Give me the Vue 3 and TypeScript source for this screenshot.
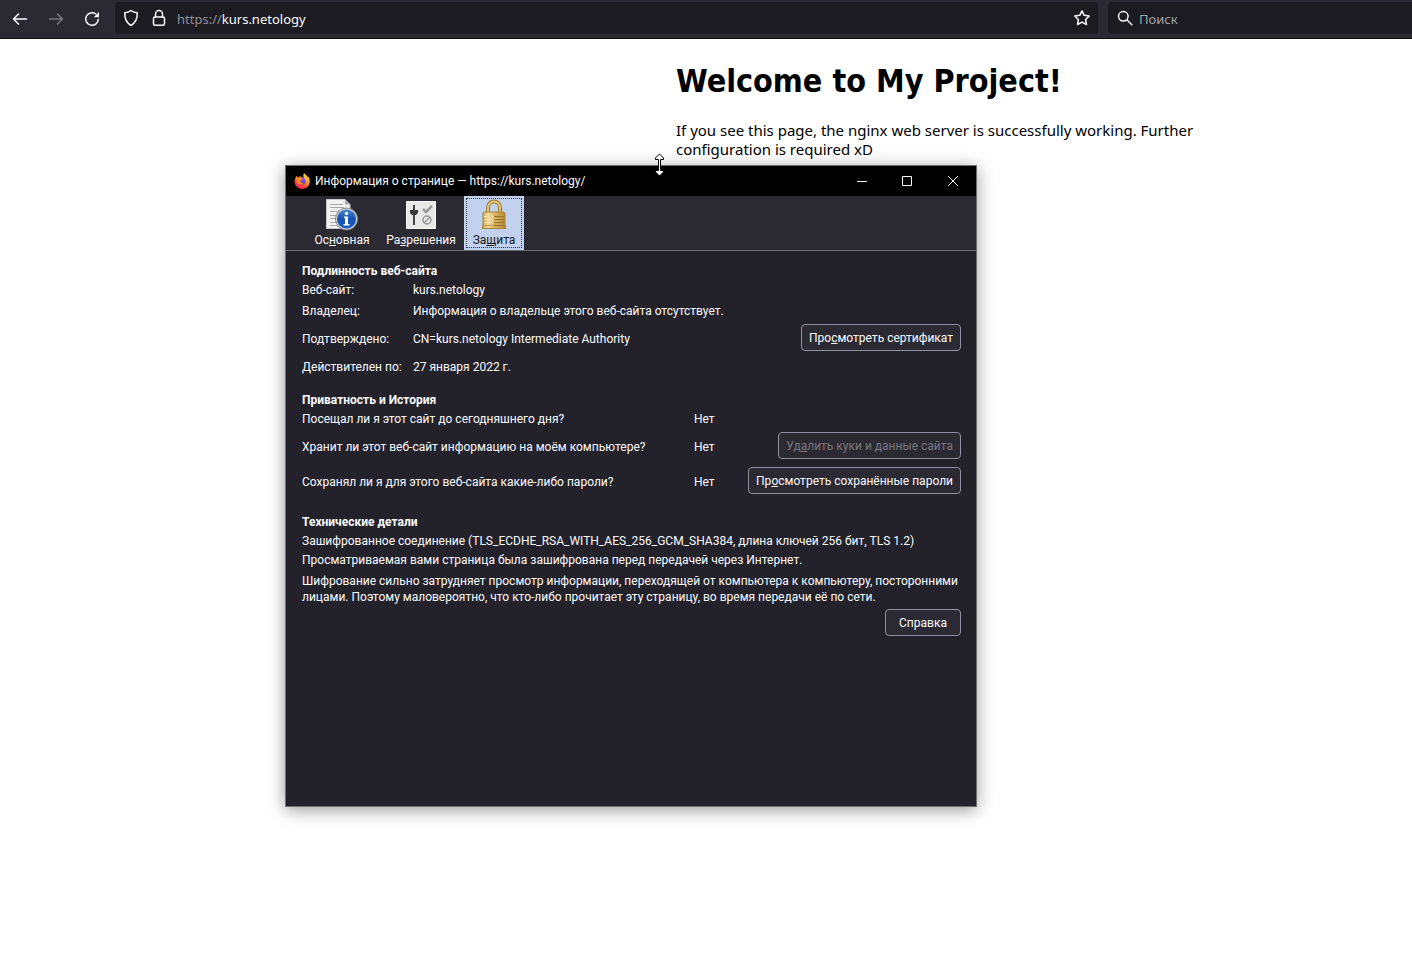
<script setup lang="ts">
import { ref } from 'vue'

interface Fact { label: string; value: string; kind: string }

const facts: Fact[] = [
  { label: 'Веб-сайт:', value: 'kurs.netology', kind: 'short' },
  { label: 'Владелец:', value: 'Информация о владельце этого веб-сайта отсутствует.', kind: 'short' },
  { label: 'Подтверждено:', value: 'CN=kurs.netology Intermediate Authority', kind: 'tall' },
  { label: 'Действителен по:', value: '27 января 2022 г.', kind: 'mid' },
]

const address = ref('kurs.netology')
const query = ref('')
</script>

<template>
  <div class="browser">
    <header class="navbar">
      <nav class="nav-buttons" aria-label="Навигация">
        <button type="button" aria-label="Назад">
          <svg width="16" height="16" viewBox="0 0 16 16"><path d="M14.5 8H1.500M6.500 3 1.500 8l5 5" /></svg>
        </button>
        <button type="button" aria-label="Вперёд" disabled>
          <svg width="16" height="16" viewBox="0 0 16 16"><path d="M1.500 8h13M9.500 3l5 5-5 5" /></svg>
        </button>
        <button type="button" aria-label="Обновить">
          <svg width="16" height="16" viewBox="0 0 16 16"><path d="M14.3 8.4A6.3 6.3 0 1 1 11.8 3" /><path class="solid" d="M15 1v5.2h-5.2z" /></svg>
        </button>
      </nav>

      <div class="field url-field">
        <svg width="16" height="18" viewBox="0 0 16 18"><path d="M8 1.5c2 1.5 4 2.1 6.2 2.3.3 5.2-1 9.5-6.2 12.7C2.8 13.3 1.5 9 1.8 3.8 4 3.6 6 3 8 1.5z" /></svg>
        <svg class="lock" width="14" height="18" viewBox="0 0 14 18"><rect x="1.5" y="8" width="11" height="8.3" rx="1.5" /><path d="M3.5 8V5a3.5 3.5 0 0 1 7 0v3" /></svg>
        <label class="url"><span class="scheme">https://</span><input v-model="address" type="text" aria-label="Адрес" /></label>
        <button type="button" aria-label="Добавить в закладки">
          <svg width="18" height="18" viewBox="0 0 18 18"><path d="m9 1.8 2.2 4.5 5 .7-3.6 3.5.9 5L9 13.1l-4.5 2.4.9-5L1.800 7l5-.7z" /></svg>
        </button>
      </div>

      <div class="field search-field">
        <svg width="16" height="16" viewBox="0 0 16 16"><circle cx="6.3" cy="6.3" r="4.8" /><path d="m9.8 9.8 5 5" /></svg>
        <input v-model="query" type="search" placeholder="Поиск" aria-label="Поиск" />
      </div>
    </header>

    <main class="page">
      <h1>Welcome to My Project!</h1>
      <p>If you see this page, the nginx web server is successfully working. Further configuration is required xD</p>
    </main>

    <section class="window" role="dialog" aria-labelledby="window-title">
      <div class="titlebar">
        <svg class="fox" width="16" height="16" viewBox="0 0 18 18">
          <defs>
            <linearGradient id="flame" x1="0.85" y1="0.05" x2="0.25" y2="1">
              <stop offset="0" stop-color="#ffe13a" /><stop offset="0.4" stop-color="#ff9a1f" /><stop offset="0.7" stop-color="#ff4a38" /><stop offset="1" stop-color="#ed1567" />
            </linearGradient>
            <linearGradient id="globe" x1="0" y1="0" x2="0" y2="1">
              <stop offset="0" stop-color="#9a5cff" /><stop offset="1" stop-color="#5a34b8" />
            </linearGradient>
          </defs>
          <path fill="url(#flame)" d="M11.5 0c1 2 3 2.500 4.300 5l.7-1c1.700 4 2 8-1 11.200C12.700 18.400 6.500 19 3 15.500.2 12.600.1 8.400 1.600 5.700L2.700 3l1.300 2c.7-.3 1.300-.3 2 0L8 3.200V5l3 .5C10 3.500 10.300 1.500 11.500 0z" />
          <circle cx="9" cy="9" r="4" fill="url(#globe)" />
          <path fill="#ff8a1f" d="M2.600 5.500 5.500 5l2.800.8 1.200 1.400c-1 .9-2.300.8-2.600 2.100.2 1.600 2 2.200 3.800 1.300-1.200 3.100-5.700 3.300-7.200.2z" />
        </svg>
        <h2 id="window-title">Информация о странице — https://kurs.netology/</h2>
        <div class="controls">
          <button type="button" aria-label="Свернуть"><svg width="10" height="10" viewBox="0 0 10 10"><path d="M0 5.5h10" /></svg></button>
          <button type="button" aria-label="Развернуть"><svg width="10" height="10" viewBox="0 0 10 10"><path d="M.5.5h9v9h-9z" /></svg></button>
          <button type="button" aria-label="Закрыть"><svg width="10" height="10" viewBox="0 0 10 10"><path d="m0 0 10 10M10 0 0 10" /></svg></button>
        </div>
      </div>

      <div class="tabs" role="tablist">
        <button type="button" role="tab" aria-selected="false">
          <svg width="34" height="32" viewBox="0 0 34 32">
            <defs>
              <linearGradient id="info" x1="0" y1="0" x2="0" y2="1"><stop offset="0" stop-color="#4a86d8" /><stop offset="0.5" stop-color="#1550b0" /><stop offset="1" stop-color="#1a60c8" /></linearGradient>
            </defs>
            <path fill="#f2f2f2" stroke="#c8c8c8" d="M1.5.5H20l5 5v24H1.500z" />
            <path fill="#aaa" d="M20 .5v5h5z" />
            <path stroke="#a8a8a8" d="M5 5.5h13M5 8.5h14M5 12.500h9M5 16.500h7M5 19.500h6M5 23.500h7M5 26.500h9" />
            <circle cx="21.500" cy="20" r="11" fill="#d4d4d4" stroke="#888" />
            <circle cx="21.500" cy="20" r="9.500" fill="url(#info)" />
            <circle cx="21.500" cy="14.500" r="1.700" fill="#fff" />
            <path fill="#fff" d="M19 17.500h4v7.500h1.500v1.500h-6V25H20v-6h-1z" />
          </svg>
          <span>Ос<u>н</u>овная</span>
        </button>
        <button type="button" role="tab" aria-selected="false">
          <svg width="34" height="32" viewBox="0 0 34 32">
            <path fill="#e8e8e8" stroke="#f8f8f8" d="M2.500 2.500h29v27h-29z" />
            <path stroke="#444" stroke-width="2" d="M10 6v20" />
            <path fill="#383838" d="M6 11h8v3l-2 2H8l-2-2z" />
            <path fill="none" stroke="#999" stroke-width="2.500" d="m19 10 3 3 6-6" />
            <circle cx="23" cy="21" r="4" fill="none" stroke="#999" stroke-width="1.500" />
            <path stroke="#999" stroke-width="1.500" d="m20 24 6-6" />
          </svg>
          <span>Ра<u>з</u>решения</span>
        </button>
        <button type="button" role="tab" aria-selected="true">
          <svg width="34" height="32" viewBox="0 0 34 32">
            <defs>
              <linearGradient id="brass" x1="0" y1="0" x2="1" y2="0"><stop offset="0" stop-color="#c39a42" /><stop offset="0.25" stop-color="#f4dda0" /><stop offset="0.55" stop-color="#d8b260" /><stop offset="1" stop-color="#b08630" /></linearGradient>
            </defs>
            <path fill="none" stroke="#9a772c" stroke-width="4" d="M11 14V8.500a6 6 0 0 1 12 0V14" />
            <path fill="none" stroke="#e4c67d" stroke-width="2" d="M11 14V8.500a6 6 0 0 1 12 0V14" />
            <path fill="url(#brass)" stroke="#a98436" d="M7.500 13h19q1.500 0 1.500 1.500V26l1 3.500H5L6 26V14.500Q6 13 7.500 13z" />
            <path stroke="#f0dba2" d="M7 17.500h10M7 20.500h10M7 23.500h10" />
            <path stroke="#9a7228" d="M17 17.500h10M17 20.500h10M17 23.500h10M17 26.500h11" />
            <path stroke="#c29a48" d="M6 26.500h11" />
          </svg>
          <span>За<u>щ</u>ита</span>
        </button>
      </div>

      <div class="panel">
        <h3>Подлинность веб-сайта</h3>
        <table class="identity">
          <tbody>
            <tr v-for="fact in facts" :key="fact.label" :class="fact.kind">
              <th scope="row">{{ fact.label }}</th>
              <td>{{ fact.value }}</td>
              <td class="action"><button v-if="fact.kind === 'tall'" class="push" type="button">Про<u>с</u>мотреть сертификат</button></td>
            </tr>
          </tbody>
        </table>

        <h3>Приватность и История</h3>
        <table class="privacy">
          <tbody>
            <tr class="short">
              <th scope="row">Посещал ли я этот сайт до сегодняшнего дня?</th>
              <td>Нет</td>
              <td class="action"></td>
            </tr>
            <tr class="tall">
              <th scope="row">Хранит ли этот веб-сайт информацию на моём компьютере?</th>
              <td>Нет</td>
              <td class="action"><button class="push" type="button" disabled>Уд<u>а</u>лить куки и данные сайта</button></td>
            </tr>
            <tr class="taller">
              <th scope="row">Сохранял ли я для этого веб-сайта какие-либо пароли?</th>
              <td>Нет</td>
              <td class="action"><button class="push" type="button">Пр<u>о</u>смотреть сохранённые пароли</button></td>
            </tr>
          </tbody>
        </table>

        <h3>Технические детали</h3>
        <p>Зашифрованное соединение (TLS_ECDHE_RSA_WITH_AES_256_GCM_SHA384, длина ключей 256 бит, TLS 1.2)</p>
        <p>Просматриваемая вами страница была зашифрована перед передачей через Интернет.</p>
        <p class="note">Шифрование сильно затрудняет просмотр информации, переходящей от компьютера к компьютеру, посторонними лицами. Поэтому маловероятно, что кто-либо прочитает эту страницу, во время передачи её по сети.</p>
        <div class="help"><button class="push" type="button">Справка</button></div>
      </div>
    </section>

    <svg class="pointer" width="11" height="24" viewBox="0 0 11 24" aria-hidden="true">
      <path d="M5.500 1 9.500 5v1.500h-3v11h3V19l-4 4-4-4v-1.500h3v-11h-3V5z" />
    </svg>
  </div>
</template>

<style>
body { margin: 0; background: #fff; }
</style>

<style scoped>
.browser { position: relative; min-height: 100vh; overflow: hidden; }
button { margin: 0; padding: 0; border: 0; background: none; color: inherit; font: inherit; }
svg { display: block; flex: none; }

.navbar {
  display: flex;
  height: 38px;
  border-bottom: 1px solid #0c0c0d;
  background: #2b2a33;
  color: #fbfbfe;
  font: 13px/18px "Noto Sans", sans-serif;
}
.navbar svg { fill: none; stroke: currentColor; stroke-width: 1.5; stroke-linecap: round; stroke-linejoin: round; }
.navbar .solid { fill: currentColor; stroke: none; }
.nav-buttons { display: flex; gap: 20px; padding: 0 15px 0 12px; }
.nav-buttons button:disabled { color: #77767e; }
.field {
  display: flex;
  align-items: center;
  box-sizing: border-box;
  height: 32px;
  margin-top: 2px;
  border-radius: 4px;
  background: #1c1b22;
}
.url-field { flex: 1; gap: 12px; padding: 0 7px 0 8px; }
.url { display: flex; flex: 1; padding-top: 2px; }
.lock { margin-right: -1px; margin-left: 1px; }
.scheme { color: #8f8f96; }
.field input { flex: 1; min-width: 0; padding: 0; border: 0; outline: 0; background: none; color: inherit; font: inherit; }
.search-field { width: 304px; margin-left: 10px; padding-left: 9px; gap: 6px; border-radius: 4px 0 0 4px; }
.search-field input { padding-top: 2px; }
.search-field input::placeholder { color: #a4a4aa; opacity: 1; }

.page { max-width: 560px; margin: 0 176px 0 auto; color: #000; font: 15px/19px "Noto Sans", sans-serif; }
.page h1 { margin: 0; padding-top: 23px; font: bold 32px/39px "DejaVu Sans Condensed", sans-serif; }
.page p { margin: 20px 0 0; }

.window {
  position: absolute;
  top: 165px;
  left: 285px;
  box-sizing: border-box;
  width: 692px;
  min-height: 642px;
  border: 1px solid #6f6f70;
  background: #23222b;
  color: #fbfbfe;
  font: 12px/16px Roboto, sans-serif;
  box-shadow: 0 3px 16px rgba(0, 0, 0, 0.4);
}
.titlebar { display: flex; align-items: center; height: 30px; padding-left: 8px; background: #000; }
.titlebar h2 { flex: 1; margin: 0 0 0 5px; font: inherit; }
.controls { display: flex; }
.controls button { display: grid; place-items: center; width: 45px; height: 28px; }
.controls button:last-child { width: 47px; }
.controls svg { fill: none; stroke: #fff; }

.tabs { display: flex; height: 54px; padding-left: 20px; border-bottom: 1px solid #6d6c72; background: #2b2a33; }
.tabs button { display: flex; flex-direction: column; align-items: center; gap: 1px; width: 72px; padding-top: 3px; }
.tabs button:nth-child(2) { width: 86px; }
.tabs button:nth-child(3) { width: 60px; }
.tabs button[aria-selected="true"] { background: #c2d2ee; color: #15141a; outline: 1px dotted #33333a; outline-offset: -3px; }

.panel { padding: 12px 15px 16px 16px; }
.panel h3 { margin: 0; font: bold 12px/16px Roboto, sans-serif; }
table { width: 100%; margin-bottom: 12px; border-spacing: 0; table-layout: fixed; }
th, td { padding: 0; font-weight: normal; text-align: left; white-space: nowrap; }
.identity th { width: 111px; }
.identity .action { width: 160px; }
.privacy { margin-bottom: 15px; }
.privacy th { width: 392px; }
.privacy .action { width: 214px; }
.short { height: 21px; }
.mid { height: 26px; }
.tall { height: 33px; }
.taller { height: 37px; }
.tall > :not(.action), .taller > :not(.action) { padding-top: 2px; }
.action { text-align: right; }
.push {
  box-sizing: border-box;
  height: 27px;
  min-width: 76px;
  padding: 0 7px;
  border: 1px solid #8f8f9d;
  border-radius: 4px;
  background: #2b2a33;
}
.push:disabled { color: #77767e; }
.action .push { display: inline-block; vertical-align: middle; }
.panel p { margin: 3px 0 0; }
.panel .note { margin-top: 5px; }
.help { display: flex; justify-content: flex-end; margin-top: 4px; }

.pointer { position: absolute; top: 153px; left: 654px; fill: #fff; stroke: #000; }
</style>
